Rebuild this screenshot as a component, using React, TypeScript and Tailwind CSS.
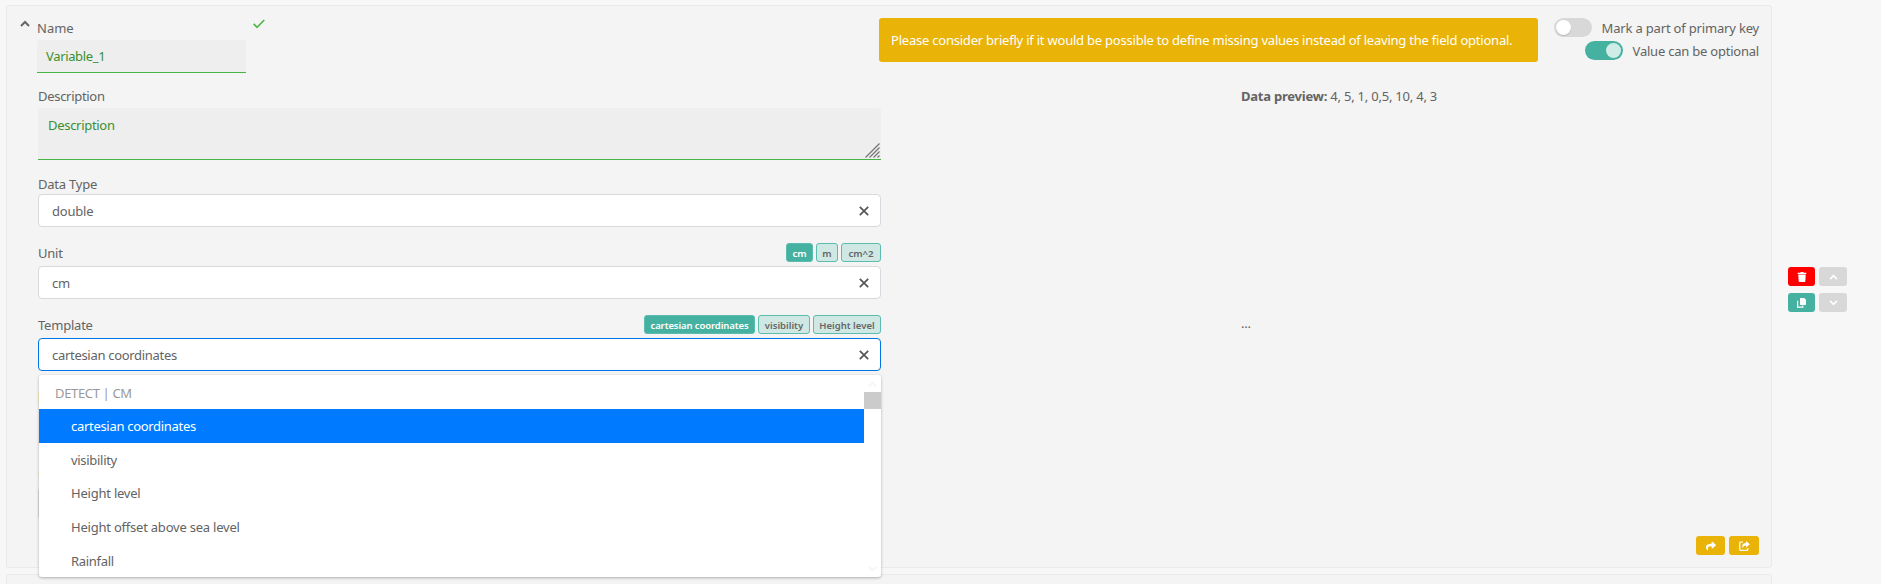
import React from "react";
import { FaTrash, FaShare } from "react-icons/fa";

const Cross = () => (
  <svg width="10" height="10" viewBox="0 0 10 10" stroke="#555" strokeWidth="1.7" fill="none">
    <path d="M0.8 0.8L9.2 9.2M9.2 0.8L0.8 9.2" />
  </svg>
);

const Chevron = ({ className, down = false }: { className: string; down?: boolean }) => (
  <svg className={className} viewBox="0 0 10 7" stroke="currentColor" strokeWidth="2" fill="none">
    <path d={down ? "M1 1L5 5L9 1" : "M1 6L5 2L9 6"} />
  </svg>
);

function Tag({ active, className, children }: { active?: boolean; className: string; children: React.ReactNode }) {
  return (
    <span
      className={`flex h-[19px] items-center justify-center rounded-[3px] border border-[#5cbcad] leading-[10px] font-semibold whitespace-nowrap ${
        active ? "bg-[#45b1a1] text-white" : "bg-[#d0e8e3] text-[#666]"
      } ${className}`}
    >
      <span className="pt-[3px]">{children}</span>
    </span>
  );
}

function Select({ value, focused }: { value: string; focused?: boolean }) {
  return (
    <div
      className={`flex h-[33px] w-[843px] items-center justify-between rounded-[4px] border bg-white pr-[11px] pl-[13px] ${
        focused ? "border-[#0073e6] tracking-[-0.3px]" : "border-[#d8d9df]"
      }`}
    >
      <span className="pt-px">{value}</span>
      <Cross />
    </div>
  );
}

const options = [
  { name: "cartesian coordinates", selected: true },
  { name: "visibility" },
  { name: "Height level" },
  { name: "Height offset above sea level" },
  { name: "Rainfall" },
];

function Dropdown() {
  return (
    <div className="absolute top-[37px] left-px z-10 flex h-[202px] w-[842px] rounded-[3px] bg-white shadow-[0_1px_3px_rgba(0,0,0,0.3)]">
      <div className="flex-1">
        <div className="flex h-[34px] items-center pl-4 pt-[2px] tracking-[-0.35px] text-[#999]">DETECT | CM</div>
        {options.map((o) => (
          <div
            key={o.name}
            className={`flex items-center pl-8 ${
              o.selected ? "h-[34px] bg-[#007bff] tracking-[-0.3px] text-white" : "h-[33.6px]"
            } ${o.name === "visibility" || o.name === "Rainfall" ? "tracking-[-0.3px]" : ""}`}
          >
            {o.name}
          </div>
        ))}
      </div>
      <div className="flex w-[17px] flex-col items-center">
        <div className="flex h-[17px] items-center">
          <Chevron className="h-[6px] w-[9px] text-[#f5f5f5]" />
        </div>
        <div className="h-[17px] w-full bg-[#cbcbcb]" />
        <div className="flex-1" />
        <div className="flex h-[17px] items-center">
          <Chevron down className="h-[6px] w-[9px] text-[#f5f5f5]" />
        </div>
      </div>
    </div>
  );
}

function Toggle({ on, label }: { on?: boolean; label: string }) {
  return (
    <div className="flex h-[19px] items-center justify-end gap-[10px]">
      <div
        className={`flex h-[19px] w-[38px] items-center rounded-full px-[2px] ${
          on ? "justify-end bg-[#45b1a1]" : "bg-[#d8d8d8]"
        }`}
      >
        <div className={`size-[15px] rounded-full ${on ? "bg-[#d0ece6]" : "bg-white shadow-[0_1px_1px_rgba(0,0,0,0.15)]"}`} />
      </div>
      <span className={`whitespace-nowrap ${on ? "tracking-[-0.22px]" : "tracking-[-0.18px]"}`}>{label}</span>
    </div>
  );
}

export default function App() {
  return (
    <div className="h-[584px] w-[1881px] overflow-hidden bg-[#f7f7f7] pt-[5px] pl-[6px] font-['Noto_Sans','Liberation_Sans',sans-serif] text-[13px] leading-[18px] tracking-[-0.22px] text-[#636363]">
      <div className="flex items-start">
        <div className="flex h-[563px] w-[1766px] justify-between rounded-[3px] border border-[#eaeaea] bg-[#f4f4f4]">
          <div className="flex">
            <div className="w-[30px] shrink-0 pt-[14px] pl-[13px]">
              <Chevron className="h-[7px] w-[10px] text-[#666]" />
            </div>
            <div className="w-[844px] shrink-0">
              <div className="flex pt-[13px]">
                <div className="w-[209px]">
                  <div className="h-[21px] tracking-normal">Name</div>
                  <div className="h-[33px] rounded-t-[3px] border-b border-[#45b545] bg-[#eee] pt-[7px] pl-[9px] tracking-[-0.35px] text-[#3a8f30]">
                    Variable_1
                  </div>
                </div>
                <svg className="ml-[7px]" width="12" height="10" viewBox="0 0 12 10" stroke="#4db848" strokeWidth="1.7" fill="none">
                  <path d="M0.7 4.8L4 8.3L11.3 1" />
                </svg>
              </div>
              <div className="ml-px pt-[14px]">
                <div className="h-[21px] tracking-[-0.3px]">Description</div>
                <div className="flex h-[52px] justify-between rounded-t-[3px] border-b border-[#45b545] bg-[#eee] pt-[8px] pl-[10px] tracking-[-0.3px] text-[#3a8f30]">
                  Description
                  <svg className="mr-px mb-px self-end" width="15" height="15" viewBox="0 0 15 15" stroke="#777" strokeWidth="1.3">
                    <path d="M0.5 14.5L14.5 0.5M4.5 14.5L14.5 4.5M8.5 14.5L14.5 8.5M12.5 14.5L14.5 12.5" />
                  </svg>
                </div>
                <div className="h-[34px] pt-[15px]">Data Type</div>
                <Select value="double" />
                <div className="flex h-[39px] justify-between pt-[16px]">
                  <span className="pt-px">Unit</span>
                  <div className="flex gap-[3px]">
                    <Tag active className="w-[27px] text-[9.7px] tracking-normal">cm</Tag>
                    <Tag className="w-[22px] text-[9.7px] tracking-normal">m</Tag>
                    <Tag className="w-[40px] text-[9.7px] tracking-normal">cm^2</Tag>
                  </div>
                </div>
                <Select value="cm" />
                <div className="flex h-[39px] justify-between pt-[16px]">
                  <span className="pt-px">Template</span>
                  <div className="flex gap-[3px]">
                    <Tag active className="w-[111px] text-[9.5px] tracking-[-0.1px]">cartesian coordinates</Tag>
                    <Tag className="w-[52px] text-[9.5px] tracking-normal">visibility</Tag>
                    <Tag className="w-[68px] text-[9.5px] tracking-normal">Height level</Tag>
                  </div>
                </div>
                <div className="relative">
                  <Select value="cartesian coordinates" focused />
                  <Dropdown />
                </div>
                <div className="mt-[21px] h-[10px] w-[100px] bg-[#f3f0c4]" />
                <div className="mt-[71px] h-px w-[100px] bg-[#ecdf86]" />
                <div className="mt-[13px] h-[33px] w-[842px] rounded-[4px] border border-[#d8d9df] bg-white" />
              </div>
            </div>
          </div>
          <div className="flex w-[890px] shrink-0 flex-col pt-[12px] pr-[12px]">
            <div className="-ml-[2px] flex h-[44px] items-start justify-between">
              <div className="flex h-[44px] w-[659px] items-center rounded-[3px] bg-[#eab308] pl-[12px] text-white">
                Please consider briefly if it would be possible to define missing values instead of leaving the field optional.
              </div>
              <div className="flex flex-col gap-[4px]">
                <Toggle label="Mark a part of primary key" />
                <Toggle on label="Value can be optional" />
              </div>
            </div>
            <div className="mt-[25px] pl-[360px]">
              <b>Data preview:</b> 4, 5, 1, 0,5, 10, 4, 3
            </div>
            <div className="mt-[209px] pl-[360px]">...</div>
            <div className="mt-auto mb-[12px] flex justify-end gap-[4px]">
              <div className="flex h-[19px] w-[29px] items-center justify-center rounded-[3px] bg-[#eab308] text-white">
                <FaShare size={10} />
              </div>
              <div className="flex h-[19px] w-[30px] items-center justify-center rounded-[3px] bg-[#eab308] text-white">
                <svg width="11" height="10" viewBox="0 0 11 10" fill="none" stroke="white">
                  <path d="M4 1H1.8Q0.8 1 0.8 2V8.4Q0.8 9.4 1.8 9.4H7.8Q8.8 9.4 8.8 8.4V7" strokeWidth="1.2" />
                  <path d="M7 0L10.8 3.2L7 6.4V4.6Q4.2 4.4 4 7.6Q1.6 2.4 7 2Z" fill="white" stroke="none" />
                </svg>
              </div>
            </div>
          </div>
        </div>
        <div className="mt-[262px] ml-[16px] grid grid-cols-[27px_28px] gap-x-[4px] gap-y-[7px]">
          <div className="flex h-[19px] items-center justify-center rounded-[3px] bg-[#ff0000] text-white">
            <FaTrash size={10} />
          </div>
          <div className="flex h-[19px] items-center justify-center rounded-[3px] bg-[#d8d8d8] text-white">
            <Chevron className="h-[6px] w-[9px]" />
          </div>
          <div className="flex h-[19px] items-center justify-center rounded-[3px] bg-[#45b1a1] text-white">
            <svg width="9" height="10" viewBox="0 0 9 10" fill="white">
              <path d="M3.5 0H7.2L9 1.8V6.3Q9 7 8.3 7H3.7Q3 7 3 6.3V0.7Q3 0 3.5 0Z" />
              <path d="M0.6 2.8V9.2H5.8V7.5" fill="none" stroke="white" strokeWidth="1.2" />
            </svg>
          </div>
          <div className="flex h-[19px] items-center justify-center rounded-[3px] bg-[#d8d8d8] text-white">
            <Chevron down className="h-[6px] w-[9px]" />
          </div>
        </div>
      </div>
      <div className="mt-[6px] h-[40px] w-[1766px] rounded-[3px] border border-[#eaeaea] bg-[#f4f4f4]" />
    </div>
  );
}
